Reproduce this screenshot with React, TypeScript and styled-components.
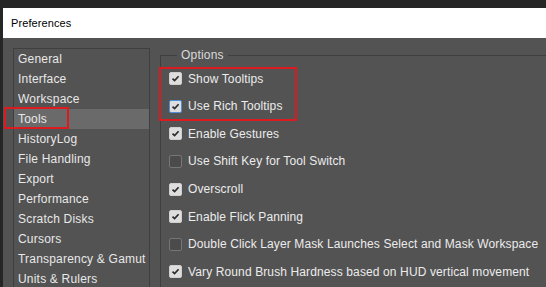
import * as React from "react";
import styled, { createGlobalStyle } from "styled-components";

const GlobalStyle = createGlobalStyle`
  html, body {
    margin: 0;
    padding: 0;
    background: #262626;
    overflow: hidden;
  }
  body {
    font-family: "Liberation Sans", Arial, sans-serif;
  }
`;

const Screen = styled.div`
  width: 546px;
  height: 287px;
  padding: 8px 0 0 3px;
  box-sizing: border-box;
  background: #262626;
  display: flex;
`;

const Window = styled.div`
  flex: 1;
  display: flex;
  flex-direction: column;
  background: #535353;
  overflow: hidden;
`;

const TitleBar = styled.div`
  height: 30px;
  flex: none;
  display: flex;
  align-items: center;
  padding-left: 8px;
  background: #ffffff;
  color: #000;
  font-size: 11px;
  letter-spacing: 0.1px;
`;

const Body = styled.div`
  flex: 1;
  display: flex;
  gap: 10px;
  padding: 10px 0 0 10px;
`;

const CategoryList = styled.ul`
  list-style: none;
  margin: 0;
  padding: 0;
  width: 135px;
  flex: none;
  border: 1px solid #3f3f3f;
  border-bottom: none;
  align-self: flex-start;
`;

const Category = styled.li<{ $selected?: boolean }>`
  position: relative;
  height: 20px;
  line-height: 20px;
  padding-left: 4px;
  font-size: 12px;
  letter-spacing: 0.2px;
  color: #e8e8e8;
  background: ${(p) => (p.$selected ? "#6a6a6a" : "transparent")};
`;

const Callout = styled.span<{ $top: number; $left: number; $w: number; $h: number }>`
  position: absolute;
  top: ${(p) => p.$top}px;
  left: ${(p) => p.$left}px;
  width: ${(p) => p.$w}px;
  height: ${(p) => p.$h}px;
  border: 2px solid #dc1a1f;
  box-sizing: border-box;
  pointer-events: none;
`;

const OptionsGroup = styled.fieldset`
  flex: 1;
  margin: 0;
  padding: 3px 0 0 8px;
  border: 1px solid #3f3f3f;
  border-right: none;
  border-bottom: none;
  min-width: 0;
`;

const Legend = styled.legend`
  margin-left: 8px;
  padding: 0 4px;
  font-size: 12px;
  line-height: 14px;
  letter-spacing: 0.2px;
  color: #dadada;
`;

const RowGroup = styled.div`
  position: relative;
`;

const Row = styled.label`
  display: flex;
  align-items: center;
  gap: 6px;
  height: 27.57px;
  font-size: 12px;
  letter-spacing: 0.12px;
  color: #ececec;
  white-space: nowrap;
`;

const Box = styled.span<{ $checked: boolean; $focus?: boolean }>`
  width: 13px;
  height: 13px;
  flex: none;
  box-sizing: border-box;
  border-radius: 2px;
  display: flex;
  align-items: center;
  justify-content: center;
  background: ${(p) => (p.$checked ? "#dedede" : "#4b4b4b")};
  border: 1px solid
    ${(p) => (p.$focus ? "#4f8fd8" : p.$checked ? "#cfcfcf" : "#767676")};
`;

const Check = () => (
  <svg width="9" height="9" viewBox="0 0 9 9">
    <polyline
      points="1.5,4.6 3.6,6.6 7.6,2.2"
      fill="none"
      stroke="#2b2b2b"
      strokeWidth="1.7"
    />
  </svg>
);

const categories = [
  "General",
  "Interface",
  "Workspace",
  "Tools",
  "HistoryLog",
  "File Handling",
  "Export",
  "Performance",
  "Scratch Disks",
  "Cursors",
  "Transparency & Gamut",
  "Units & Rulers",
];

type Opt = { label: string; checked: boolean; focus?: boolean };

const highlighted: Opt[] = [
  { label: "Show Tooltips", checked: true },
  { label: "Use Rich Tooltips", checked: true, focus: true },
];

const options: Opt[] = [
  { label: "Enable Gestures", checked: true },
  { label: "Use Shift Key for Tool Switch", checked: false },
  { label: "Overscroll", checked: true },
  { label: "Enable Flick Panning", checked: true },
  { label: "Double Click Layer Mask Launches Select and Mask Workspace", checked: false },
  { label: "Vary Round Brush Hardness based on HUD vertical movement", checked: true },
];

const Option = ({ label, checked, focus }: Opt) => (
  <Row>
    <Box $checked={checked} $focus={focus}>
      {checked && <Check />}
    </Box>
    {label}
  </Row>
);

export default function App() {
  return (
    <>
      <GlobalStyle />
      <Screen>
        <Window>
          <TitleBar>Preferences</TitleBar>
          <Body>
            <CategoryList>
              {categories.map((c) => (
                <Category key={c} $selected={c === "Tools"}>
                  {c}
                  {c === "Tools" && <Callout $top={-2} $left={-10} $w={65} $h={22} />}
                </Category>
              ))}
            </CategoryList>
            <OptionsGroup>
              <Legend>Options</Legend>
              <RowGroup>
                {highlighted.map((o) => (
                  <Option key={o.label} {...o} />
                ))}
                <Callout $top={2} $left={-10} $w={138} $h={54} />
              </RowGroup>
              {options.map((o) => (
                <Option key={o.label} {...o} />
              ))}
            </OptionsGroup>
          </Body>
        </Window>
      </Screen>
    </>
  );
}
